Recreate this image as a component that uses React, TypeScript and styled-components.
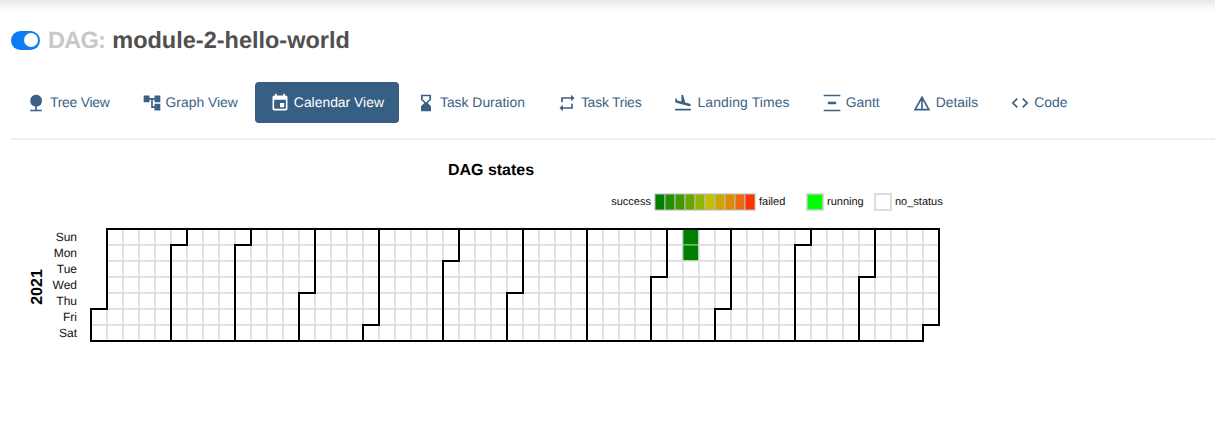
import React from 'react'
import styled, { createGlobalStyle } from 'styled-components'
import {
	MdNature,
	MdAccountTree,
	MdEvent,
	MdHourglassBottom,
	MdRepeat,
	MdFlightLand,
	MdVerticalDistribute,
	MdDetails,
	MdCode,
} from 'react-icons/md'

const CELL = 16
const LEFT = 91
const TOP = 229
const YEAR = 2021
const WEEKDAYS = ['Sun', 'Mon', 'Tue', 'Wed', 'Thu', 'Fri', 'Sat']
const LEGEND = ['#008000', '#239000', '#449900', '#66a800', '#92b500', '#c4c000', '#cfa500', '#e08a00', '#ee6a10', '#ff3300']

const tabs = [
	{ label: 'Tree View', icon: MdNature, spacing: -0.25 },
	{ label: 'Graph View', icon: MdAccountTree },
	{ label: 'Calendar View', icon: MdEvent, active: true },
	{ label: 'Task Duration', icon: MdHourglassBottom },
	{ label: 'Task Tries', icon: MdRepeat, spacing: -0.2 },
	{ label: 'Landing Times', icon: MdFlightLand, spacing: 0.15 },
	{ label: 'Gantt', icon: MdVerticalDistribute },
	{ label: 'Details', icon: MdDetails },
	{ label: 'Code', icon: MdCode },
]

const days = () => {
	const result: { col: number; row: number; date: Date }[] = []
	const first = new Date(YEAR, 0, 1).getDay()
	for (let i = 0; i < 365; i++) {
		const date = new Date(YEAR, 0, 1 + i)
		result.push({ col: Math.floor((i + first) / 7), row: date.getDay(), date })
	}
	return result
}

const monthPath = (month: number) => {
	const first = new Date(YEAR, month, 1)
	const last = new Date(YEAR, month + 1, 0)
	const start = new Date(YEAR, 0, 1).getDay()
	const week = (d: Date) => {
		const dayOfYear = Math.round((d.getTime() - new Date(YEAR, 0, 1).getTime()) / 86400000)
		return Math.floor((dayOfYear + start) / 7)
	}
	const x0 = LEFT + week(first) * CELL
	const x1 = LEFT + week(last) * CELL
	const d0 = first.getDay()
	const d1 = last.getDay()
	return `M${x0 + CELL},${TOP + d0 * CELL}H${x0}V${TOP + 7 * CELL}H${x1}V${TOP + (d1 + 1) * CELL}H${x1 + CELL}V${TOP}H${x0 + CELL}Z`
}

const isSuccess = (date: Date) => date.getMonth() === 8 && (date.getDate() === 12 || date.getDate() === 13)

export default function App() {
	return (
		<>
			<GlobalStyle />
			<TopShade />
			<Page>
				<Heading>
					<Toggle />
					<Muted>DAG:</Muted> module-2-hello-world
				</Heading>
				<Tabs>
					{tabs.map(({ label, icon: Icon, active, spacing }) => (
						<Tab key={label} $active={active}>
							<Icon size={20} />
							<TabLabel $spacing={spacing}>{label}</TabLabel>
						</Tab>
					))}
				</Tabs>
			</Page>
			<Chart width={1215} height={260} viewBox="0 140 1215 260">
				<ChartTitle x={491} y={175}>DAG states</ChartTitle>

				<LegendText x={651} y={205} textAnchor="end">success</LegendText>
				{LEGEND.map((color, i) => (
					<rect key={color} x={655 + i * 10} y={194} width={10} height={16} fill={color} stroke="#bbb" />
				))}
				<LegendText x={759} y={205}>failed</LegendText>
				<rect x={807} y={194} width={16} height={16} fill="#00ff00" stroke="#ccc" strokeWidth={1.5} />
				<LegendText x={827} y={205}>running</LegendText>
				<rect x={875} y={194} width={16} height={16} fill="#fff" stroke="#ddd" strokeWidth={2} />
				<LegendText x={895} y={205}>no_status</LegendText>

				<YearLabel transform="translate(42 287) rotate(-90)" textAnchor="middle">{YEAR}</YearLabel>
				{WEEKDAYS.map((day, i) => (
					<DayLabel key={day} x={77} y={TOP + i * CELL + 12} textAnchor="end">{day}</DayLabel>
				))}

				{days().map(({ col, row, date }) => (
					<rect
						key={date.getTime()}
						x={LEFT + col * CELL}
						y={TOP + row * CELL}
						width={CELL}
						height={CELL}
						fill={isSuccess(date) ? '#008000' : '#fff'}
						stroke={isSuccess(date) ? '#9ec49e' : '#ddd'}
						strokeWidth={isSuccess(date) ? 1 : 1.5}
					/>
				))}
				{Array.from({ length: 12 }, (_, m) => (
					<path key={m} d={monthPath(m)} fill="none" stroke="#000" strokeWidth={2} />
				))}
			</Chart>
		</>
	)
}

const GlobalStyle = createGlobalStyle`
	html, body {
		margin: 0;
		background: #fff;
		overflow: hidden;
	}
	body {
		font-family: 'Liberation Sans', Arial, sans-serif;
		text-rendering: geometricPrecision;
	}
`
const TopShade = styled.div`
	height: 14px;
	background: linear-gradient(#e8e8e8, #f6f6f6 45%, #fff);
`
const Page = styled.div`
	padding: 12px 0 0 11px;
`
const Heading = styled.h4`
	display: flex;
	align-items: center;
	gap: 7px;
	height: 28px;
	margin: 0 0 28px;
	font-size: 23.5px;
	font-weight: 700;
	line-height: 28px;
	color: #51504f;
`
const Muted = styled.span`
	color: #c8c8c8;
	letter-spacing: -0.7px;
`
const Toggle = styled.span`
	position: relative;
	width: 29px;
	height: 19px;
	margin-right: 1px;
	border-radius: 10px;
	background: #0d7bf2;
	&::after {
		content: '';
		position: absolute;
		top: 2.5px;
		right: 2.5px;
		width: 14px;
		height: 14px;
		border-radius: 50%;
		background: #fff;
	}
`
const Tabs = styled.nav`
	display: flex;
	gap: 2px;
	padding-bottom: 15px;
	border-bottom: 2px solid #eee;
`
const Tab = styled.a<{ $active?: boolean }>`
	display: flex;
	align-items: center;
	gap: 4px;
	height: 41px;
	padding: 0 15px;
	box-sizing: border-box;
	border-radius: 4px;
	font-size: 13.9px;
	color: ${(props) => (props.$active ? '#fff' : '#3b6286')};
	background: ${(props) => (props.$active ? '#375f84' : 'transparent')};
`
const TabLabel = styled.span<{ $spacing?: number }>`
	padding-bottom: 2px;
	letter-spacing: ${(props) => props.$spacing ?? 0}px;
`
const Chart = styled.svg`
	display: block;
	font-family: 'Liberation Sans', Arial, sans-serif;
`
const ChartTitle = styled.text`
	font-size: 16px;
	font-weight: 700;
	text-anchor: middle;
	fill: #000;
`
const LegendText = styled.text`
	font-size: 11px;
	fill: #111;
`
const DayLabel = styled.text`
	font-size: 12px;
	fill: #111;
`
const YearLabel = styled.text`
	font-size: 16px;
	font-weight: 700;
	fill: #000;
`
